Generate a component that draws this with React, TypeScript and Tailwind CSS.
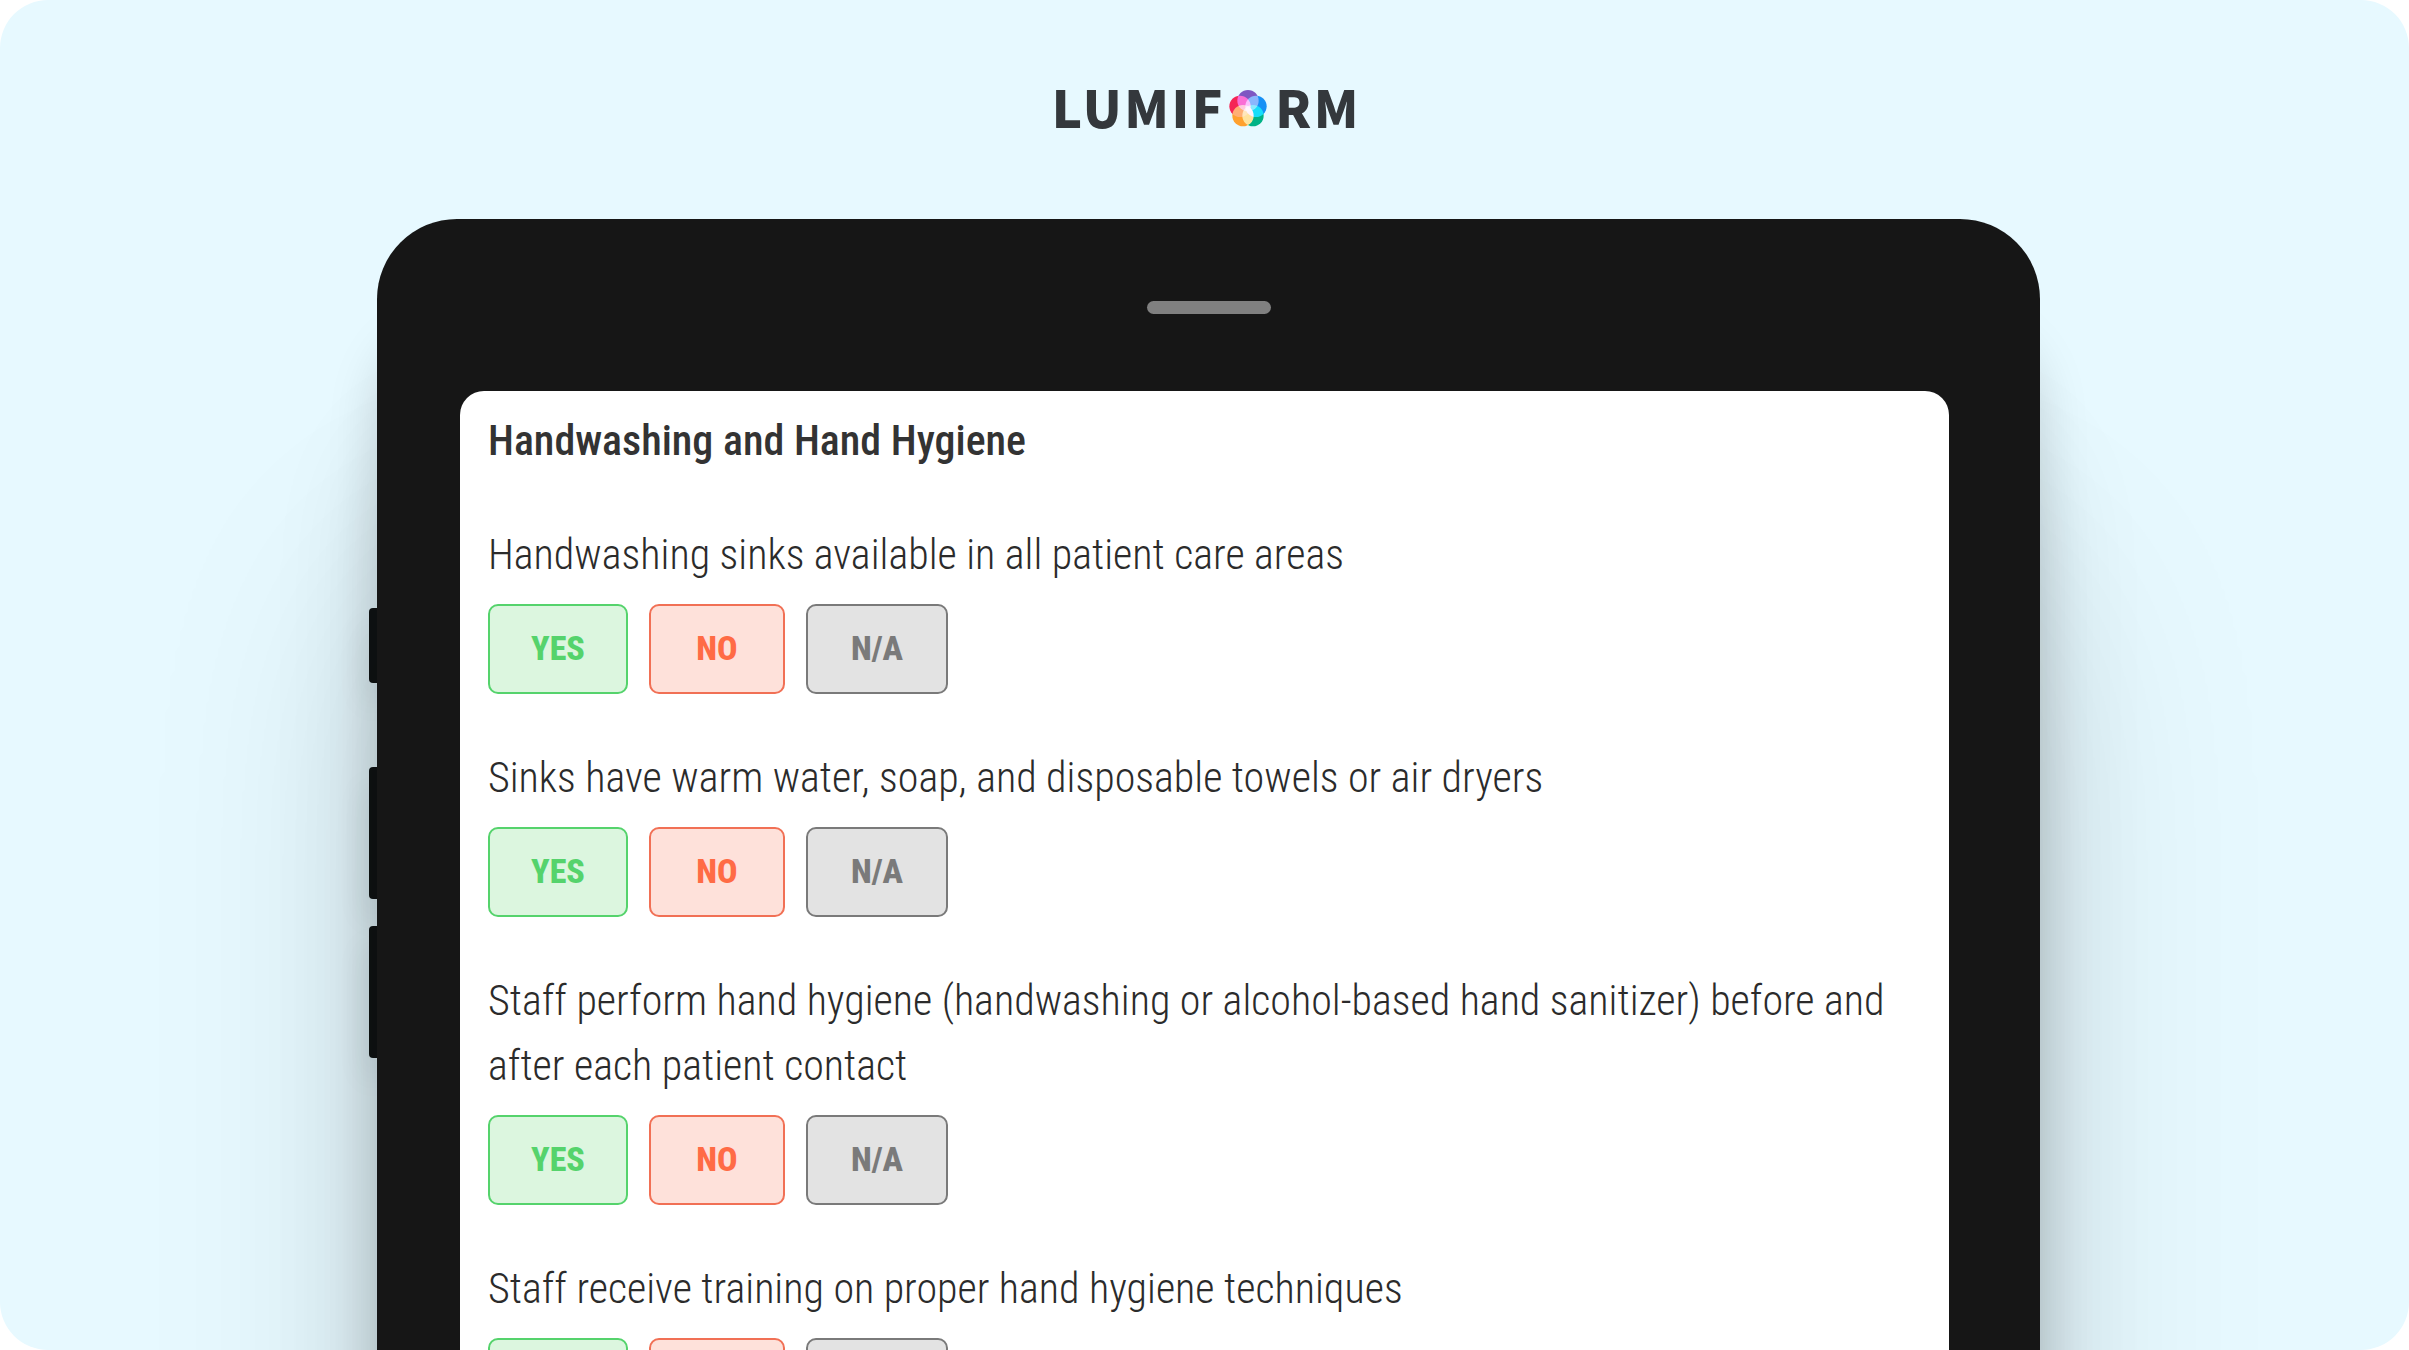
import React from "react";

const questions = [
  "Handwashing sinks available in all patient care areas",
  "Sinks have warm water, soap, and disposable towels or air dryers",
  "Staff perform hand hygiene (handwashing or alcohol-based hand sanitizer) before and after each patient contact",
  "Staff receive training on proper hand hygiene techniques",
];

const answers = [
  { label: "YES", style: "w-[140px] border-[#55d36c] bg-[#dcf6df] text-[#55d36c]" },
  { label: "NO", style: "w-[136px] border-[#f17055] bg-[#fee1da] text-[#ff6b45]" },
  { label: "N/A", style: "w-[142px] border-[#7a7a7a] bg-[#e3e3e3] text-[#7a7a7a]" },
];

const petals = [
  { x: 0, y: -25, color: "#7e57c2" },
  { x: 24, y: -8, color: "#1790f5" },
  { x: 15, y: 20, color: "#00b386" },
  { x: -15, y: 20, color: "#ffa12e" },
  { x: -24, y: -8, color: "#f52555" },
];

function Gem() {
  return (
    <svg viewBox="-57 -57 114 114" className="isolate size-[38px]" aria-hidden="true">
      {petals.map((p) => (
        <circle key={p.color} cx={p.x} cy={p.y} r="32" fill={p.color} className="mix-blend-screen" />
      ))}
    </svg>
  );
}

function Logo() {
  return (
    <h1
      aria-label="Lumiform"
      className="flex items-center justify-center gap-1 pl-1 font-['Noto_Sans_CJK_SC','Lato',sans-serif] text-[51px] leading-[54px] font-black tracking-wider text-[#34383c]"
    >
      <span className="pb-1.5">LUMIF</span>
      <Gem />
      <span className="pb-1.5 pl-1">RM</span>
    </h1>
  );
}

function Question({ text }: { text: string }) {
  return (
    <fieldset className="flex flex-col">
      <legend className="pb-[17px] text-[42px] leading-[65px] font-light">{text}</legend>
      <div className="flex gap-[21px]">
        {answers.map((a) => (
          <button
            key={a.label}
            type="button"
            className={`h-[90px] rounded-[10px] border-2 pb-0.5 text-[34px] leading-none font-extrabold ${a.style}`}
          >
            {a.label}
          </button>
        ))}
      </div>
    </fieldset>
  );
}

const sideButton = "w-2 rounded-l-[4px] bg-[#101516] shadow-[0_20px_30px_rgba(0,0,0,0.15)]";

export default function App() {
  return (
    <div className="h-screen bg-white">
      <main className="h-full overflow-hidden rounded-[48px] bg-[#e7f9ff] pt-[79px] font-['Roboto_Condensed','Roboto',sans-serif] text-[#2b2b2b]">
        <Logo />
        <div className="mx-auto mt-20 flex max-w-[1671px] items-stretch">
          <div className="flex w-2 flex-none flex-col pt-[389px]">
            <div className={`h-[75px] ${sideButton}`} />
            <div className={`mt-[84px] h-[132px] ${sideButton}`} />
            <div className={`mt-[27px] h-[132px] ${sideButton}`} />
          </div>
          <section className="min-h-[1500px] flex-1 rounded-t-[80px] bg-[#161616] shadow-[0_110px_50px_rgba(0,0,0,0.15),0_220px_110px_rgba(0,0,0,0.12),0_360px_240px_rgba(0,0,0,0.13)]">
            <div className="flex h-[172px] items-center justify-center pt-1">
              <div className="h-[13px] w-[124px] rounded-full bg-[#808080]" />
            </div>
            <div className="mr-[91px] ml-[83px] flex min-h-[1320px] flex-col rounded-t-[24px] bg-white px-7 pt-[17px]">
              <h2 className="text-[42px] leading-[65px] font-medium text-[#333333]">Handwashing and Hand Hygiene</h2>
              <div className="mt-[49px] flex flex-col gap-[51px]">
                {questions.map((q) => (
                  <Question key={q} text={q} />
                ))}
              </div>
            </div>
          </section>
        </div>
      </main>
    </div>
  );
}
